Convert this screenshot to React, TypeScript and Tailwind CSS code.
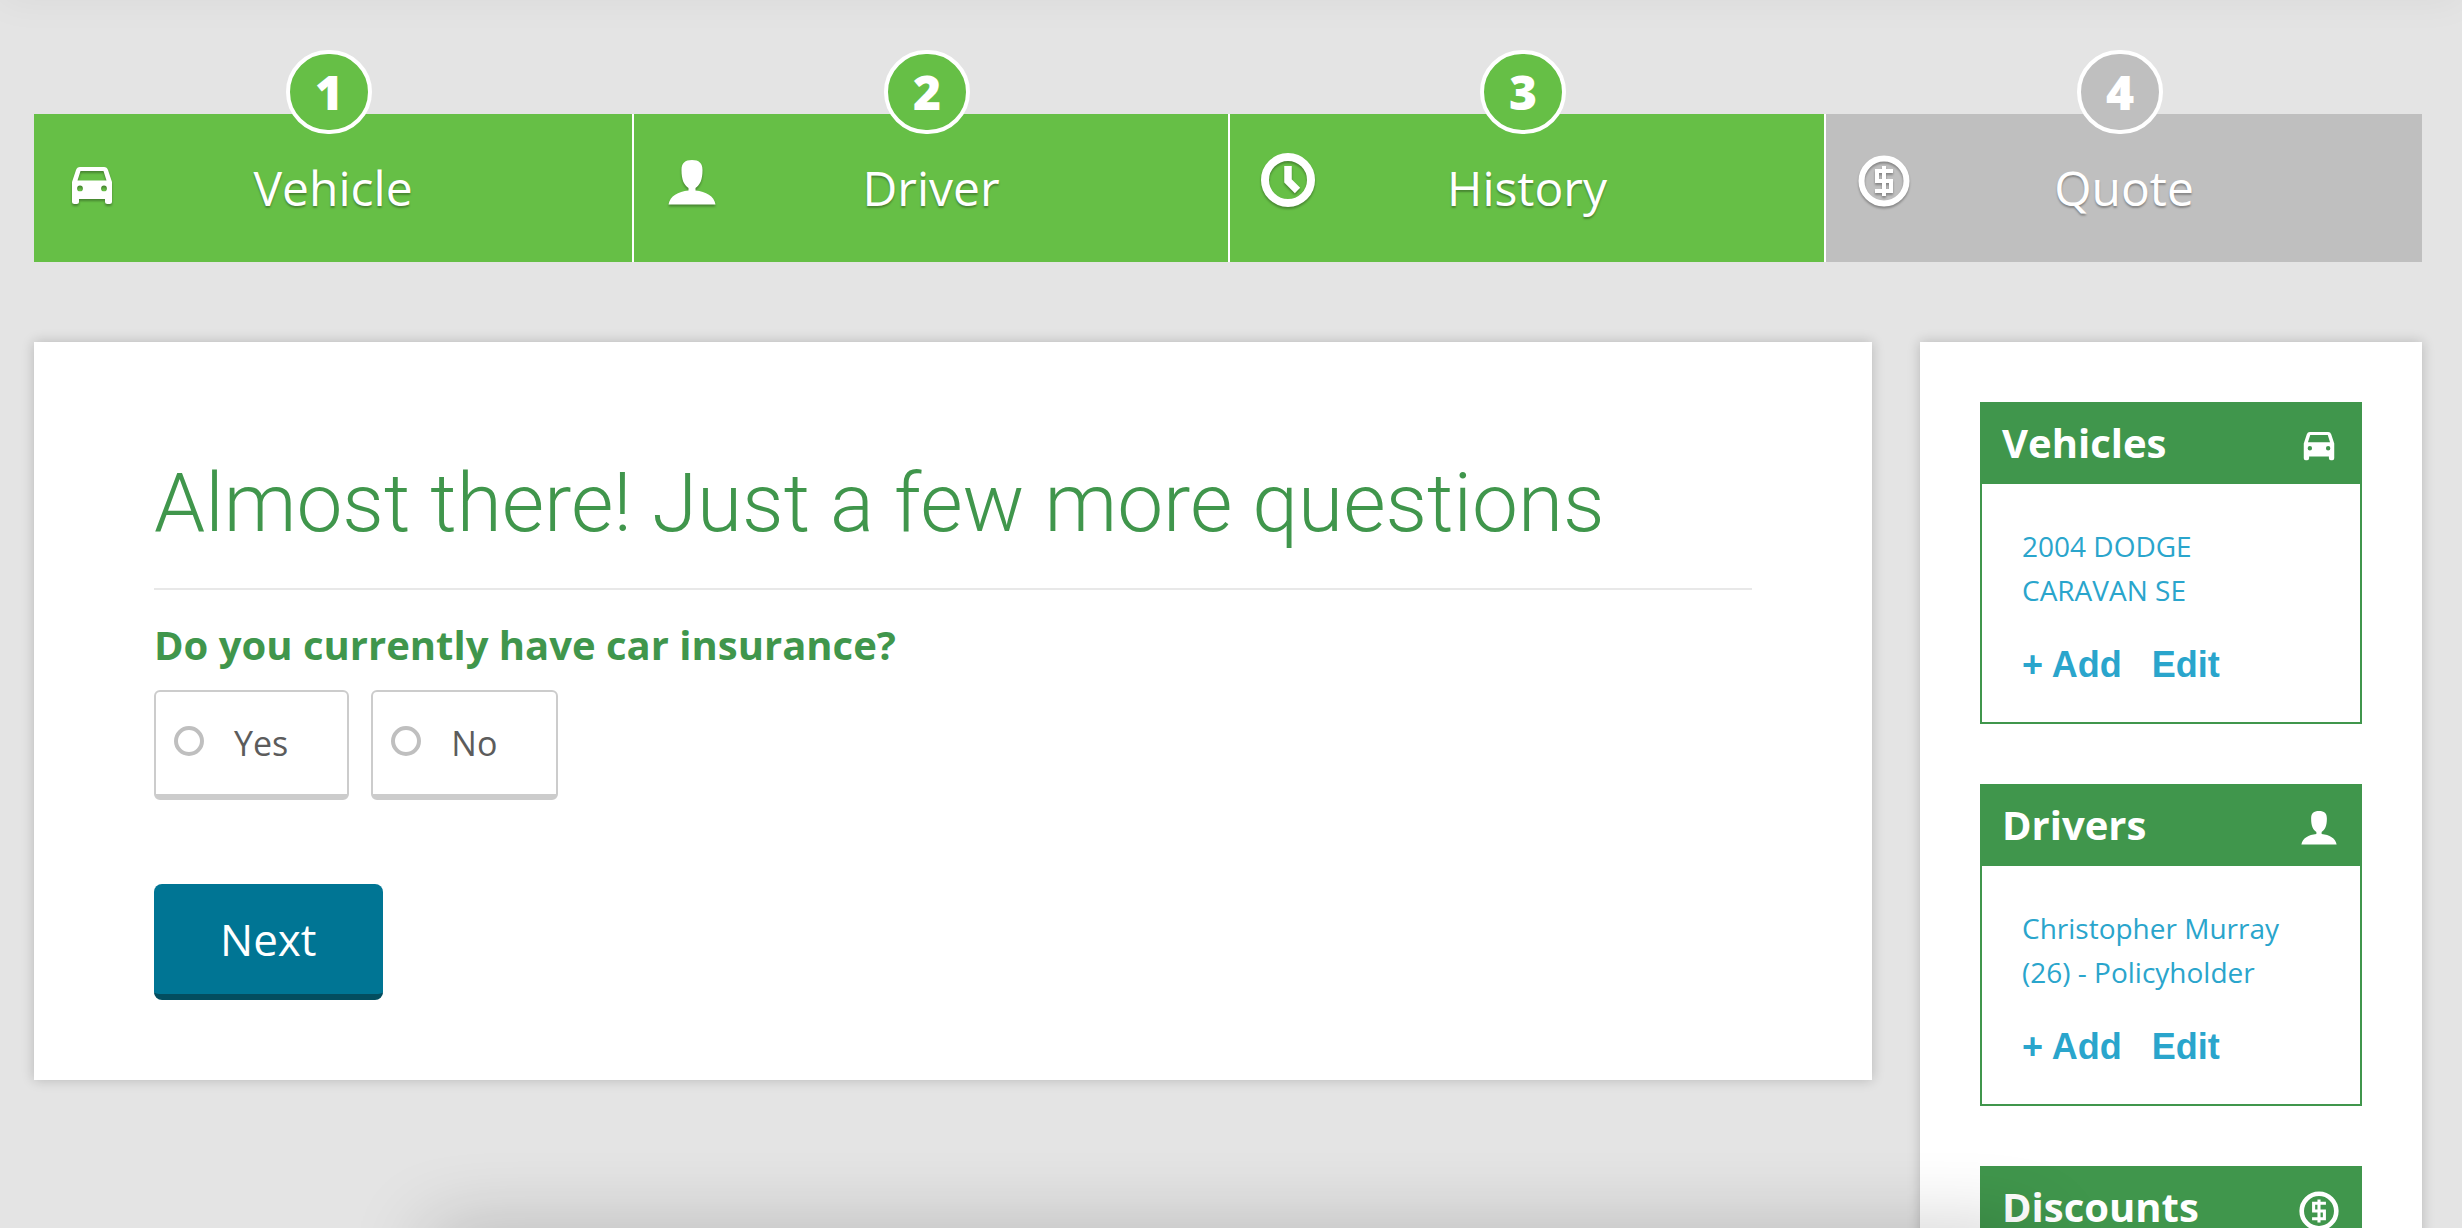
import React from "react";

type IconProps = { className?: string };

const CarIcon = ({ className }: IconProps) => (
  <svg viewBox="0 0 42 40" className={className} fill="currentColor" aria-hidden="true">
    <path
      fillRule="evenodd"
      d="M9 0H33Q36 0 37 3L41 15V34.500Q41 37 38.500 37H36.500Q34 37 34 34.500V32H8V34.500Q8 37 5.500 37H3.500Q1 37 1 34.500V15L5 3Q6 0 9 0ZM9.500 4L6.500 13.500H35.500L32.500 4ZM9 18.500a2.900 2.900 0 1 0 0 5.800a2.900 2.900 0 1 0 0-5.800ZM33 18.500a2.900 2.900 0 1 0 0 5.800a2.900 2.900 0 1 0 0-5.800Z"
    />
  </svg>
);

const PersonIcon = ({ className }: IconProps) => (
  <svg viewBox="0 0 48 47" className={className} fill="currentColor" aria-hidden="true">
    <path d="M24 0C31 0 34.500 3 34.500 10C34.500 20 32 25 27.500 28V30.500C38 31.500 46 36 47.500 44.500H.500C2 36 10 31.500 20.500 30.500V28C16 25 13.500 20 13.500 10C13.500 3 17 0 24 0Z" />
  </svg>
);

const ClockIcon = ({ className }: IconProps) => (
  <svg viewBox="0 0 54 54" className={className} fill="none" stroke="currentColor" aria-hidden="true">
    <circle cx="27" cy="27" r="23" strokeWidth="8" />
    <path d="M27 13V28L36.500 37.500" strokeWidth="7.500" />
  </svg>
);

const DollarIcon = ({ className }: IconProps) => (
  <svg viewBox="0 0 52 52" className={className} fill="none" stroke="currentColor" aria-hidden="true">
    <circle cx="26" cy="26" r="22.500" strokeWidth="6" />
    <path d="M26 11V41M35 16H19V26H33V36H17" strokeWidth="4" />
  </svg>
);

const steps = [
  { n: 1, label: "Vehicle", icon: <CarIcon className="w-[42px]" />, done: true },
  { n: 2, label: "Driver", icon: <PersonIcon className="w-12" />, done: true },
  { n: 3, label: "History", icon: <ClockIcon className="w-[54px]" />, done: true },
  { n: 4, label: "Quote", icon: <DollarIcon className="w-[52px]" />, done: false },
];

function Steps() {
  return (
    <nav aria-label="Progress">
      <ol className="grid grid-cols-[600fr_596fr_596fr_596fr]">
        {steps.map(({ n, label, icon, done }) => (
          <li
            key={n}
            className={`relative flex h-[148px] items-center pr-1 text-white not-last:border-r-2 not-last:border-white ${
              done ? "bg-[#66bf46]" : "bg-[#bfbfbf]"
            }`}
          >
            <span
              className={`absolute -top-16 left-1/2 -ml-[47px] flex h-[84px] w-[86px] items-center justify-center rounded-full border-4 border-white text-5xl font-extrabold ${
                done ? "bg-[#66bf46]" : "bg-[#bfbfbf]"
              }`}
            >
              {n}
            </span>
            <span className="flex h-full w-[116px] shrink-0 items-end justify-center pb-[55px] drop-shadow-[0_2px_1px_rgba(0,0,0,0.3)]">
              {icon}
            </span>
            <span className="flex-1 pr-28 text-center text-5xl text-shadow-[0_2px_2px_rgba(0,0,0,0.3)]">
              {label}
            </span>
          </li>
        ))}
      </ol>
    </nav>
  );
}

function Choice({ label }: { label: string }) {
  return (
    <label className="flex h-[110px] items-center gap-[30px] rounded-md border-2 border-b-[6px] border-[#cccccc] bg-white pr-[59px] pl-[18px] text-[34px] text-[#5c5c5c]">
      <input
        type="radio"
        name="insured"
        className="mb-1 size-[30px] appearance-none rounded-full border-4 border-[#bfbfbf] checked:bg-[#bfbfbf]"
      />
      {label}
    </label>
  );
}

function SummaryCard({ title, icon, text }: { title: string; icon: React.ReactNode; text?: string }) {
  return (
    <section className="border-2 border-[#40964c]">
      <header className="flex h-20 items-center justify-between bg-[#40964c] px-5 text-white">
        <h2 className="pb-0.5 text-[40px] leading-[48px] font-bold">{title}</h2>
        <span className="flex w-[42px] justify-center pt-1.5">{icon}</span>
      </header>
      {text && (
        <div className="px-10 pt-10 pb-[30px] text-[#2aa5cc]">
          <a href="#" className="block text-[28px] leading-[44px]">
            {text}
          </a>
          <div className="mt-[26px] flex gap-[30px] font-['Liberation_Sans',sans-serif] text-4xl leading-[54px] font-bold">
            <a href="#">+ Add</a>
            <a href="#">Edit</a>
          </div>
        </div>
      )}
    </section>
  );
}

export default function App() {
  return (
    <div className="relative h-screen overflow-hidden bg-[#e4e4e4] px-[34px] pr-10 pt-[114px] font-['Open_Sans',sans-serif]">
      <Steps />
      <div className="mt-20 flex items-start gap-12">
        <main className="min-w-0 flex-1 bg-white px-[120px] pt-[114px] pb-20 shadow-[0_0_12px_rgba(0,0,0,0.2)]">
          <h1 className="border-b-2 border-[#e8e8e8] pb-[38px] font-['Roboto',sans-serif] text-[82px] leading-[94px] font-light text-[#40964c]">
            Almost there! Just a few more questions
          </h1>
          <fieldset className="mt-7">
            <legend className="text-[40px] leading-[54px] font-bold text-[#40964c]">
              Do you currently have car insurance?
            </legend>
            <div className="mt-[18px] flex gap-[22px]">
              <Choice label="Yes" />
              <Choice label="No" />
            </div>
          </fieldset>
          <button
            type="button"
            className="mt-[84px] h-[116px] rounded-lg border-b-[6px] border-[#034d5f] bg-[#007594] px-[66px] text-[44px] text-white"
          >
            Next
          </button>
        </main>
        <aside className="flex w-[502px] shrink-0 flex-col gap-[60px] bg-white p-[60px] pb-40 shadow-[0_0_12px_rgba(0,0,0,0.2)]">
          <SummaryCard title="Vehicles" icon={<CarIcon className="w-8" />} text="2004 DODGE CARAVAN SE" />
          <SummaryCard
            title="Drivers"
            icon={<PersonIcon className="w-9" />}
            text="Christopher Murray (26) - Policyholder"
          />
          <SummaryCard title="Discounts" icon={<DollarIcon className="w-10" />} />
        </aside>
      </div>
      <div className="pointer-events-none absolute inset-x-[430px] -bottom-12 h-10 shadow-[0_0_80px_rgba(0,0,0,0.3)]" />
      <div className="pointer-events-none absolute inset-x-0 -top-10 h-10 shadow-[0_0_40px_rgba(0,0,0,0.05)]" />
    </div>
  );
}
